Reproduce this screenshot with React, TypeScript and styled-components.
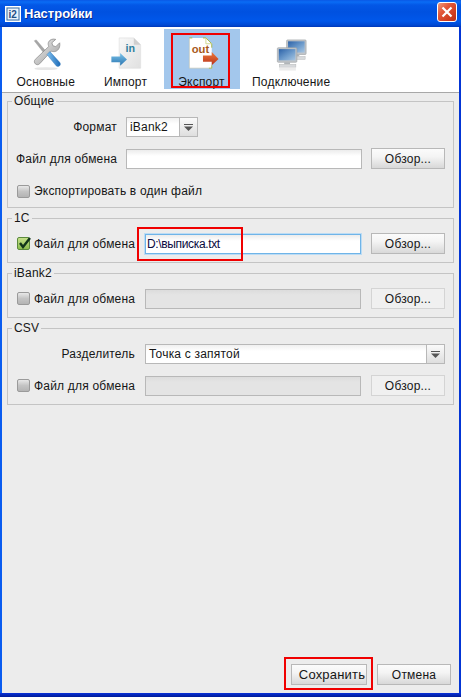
import React from "react";
import styled, { createGlobalStyle } from "styled-components";

const GlobalStyle = createGlobalStyle`
  html, body {
    margin: 0;
    padding: 0;
    background: #ececec;
  }
  * {
    box-sizing: border-box;
  }
`;

const Window = styled.div`
  width: 461px;
  height: 697px;
  display: flex;
  flex-direction: column;
  overflow: hidden;
  font-family: "Liberation Sans", Arial, sans-serif;
  font-size: 12px;
  color: #161616;
  background:
    linear-gradient(to bottom, #0831d9, #001a96) bottom / 100% 4px no-repeat,
    linear-gradient(to right, #0a5cf0 0, #0a5cf0 3px, #0335d5 3px);
`;

const TitleBar = styled.div`
  height: 27px;
  flex: none;
  display: flex;
  align-items: center;
  padding: 0 4px 0 5px;
  background: linear-gradient(
    to bottom,
    #0a58e6 0,
    #0a6cf5 2px,
    #0357e6 5px,
    #0051e0 12px,
    #0057ea 21px,
    #0049d4 25px,
    #0037b8 27px
  );
`;

const TitleText = styled.span`
  margin-left: 3px;
  flex: 1;
  color: #fff;
  font-size: 13px;
  font-weight: 700;
  text-shadow: 1px 1px 0 #0a2c90;
`;

const CloseButton = styled.div`
  width: 20px;
  height: 20px;
  margin-top: -3px;
  border: 1px solid #fff;
  border-radius: 3px;
  background: linear-gradient(135deg, #ee9a7c 0, #e2583a 35%, #cf3c1e 75%, #b9321a 100%);
  display: flex;
  align-items: center;
  justify-content: center;
`;

const Frame = styled.div`
  flex: 1;
  min-height: 0;
  display: flex;
  flex-direction: column;
  margin: 0 2px 4px;
  background: #ececec;
`;

const Toolbar = styled.div`
  flex: none;
  display: flex;
  height: 66px;
  padding: 2px 2px 3px;
  background: #fff;
  border-bottom: 1px solid #a8a8a8;
`;

const Tab = styled.div<{ $active?: boolean }>`
  position: relative;
  min-width: 76px;
  padding: 6px 12.5px 0;
  display: flex;
  flex-direction: column;
  align-items: center;
  background: ${(p) => (p.$active ? "#a3c7ec" : "transparent")};
`;

const TabLabel = styled.span`
  margin-top: 1px;
  letter-spacing: 0.2px;
  line-height: 14px;
  white-space: nowrap;
`;

const Highlight = styled.div<{ $t: number; $r: number; $b: number; $l: number }>`
  position: absolute;
  top: ${(p) => p.$t}px;
  right: ${(p) => p.$r}px;
  bottom: ${(p) => p.$b}px;
  left: ${(p) => p.$l}px;
  border: 2px solid #f00000;
  pointer-events: none;
`;

const Body = styled.div`
  flex: 1;
  min-height: 0;
  display: flex;
  flex-direction: column;
  gap: 3px;
  padding: 1px 5px 0;
`;

const Group = styled.fieldset`
  margin: 0;
  min-width: 0;
  padding: 0 8px 8px;
  border: 1px solid #c4c4c4;
  display: flex;
  flex-direction: column;
`;

const Legend = styled.legend`
  margin-left: -4px;
  padding: 0 2px;
  height: 15px;
  line-height: 15px;
  letter-spacing: 0.2px;
`;

const Row = styled.div<{ $label: number; $gap: number; $top: number }>`
  display: grid;
  grid-template-columns: ${(p) => p.$label}px 1fr 74px;
  column-gap: ${(p) => p.$gap}px;
  align-items: end;
  margin-top: ${(p) => p.$top}px;
`;

const FieldLabel = styled.span`
  align-self: center;
  text-align: right;
  letter-spacing: 0.2px;
  white-space: nowrap;
`;

const CheckLabel = styled.label`
  align-self: center;
  min-height: 16px;
  display: flex;
  align-items: center;
  gap: 4px;
  padding-left: 1px;
  letter-spacing: 0.2px;
  white-space: nowrap;
`;

const CheckBox = styled.span<{ $checked?: boolean }>`
  width: 13px;
  height: 13px;
  flex: none;
  position: relative;
  border: 1px solid ${(p) => (p.$checked ? "#5b8a3c" : "#9a9a9a")};
  border-radius: 2px;
  background: ${(p) =>
    p.$checked
      ? "linear-gradient(to bottom, #c5e08a, #8cbd4e)"
      : "linear-gradient(to bottom, #e8e8e8, #c4c4c4 50%, #b4b4b4)"};
`;

const CheckMark = styled.svg`
  position: absolute;
  left: -1px;
  top: -2px;
`;

const InputBox = styled.div`
  position: relative;
  min-width: 0;
`;

const TextInput = styled.input<{ $focused?: boolean }>`
  display: block;
  width: 100%;
  height: 20px;
  padding: 0 1px;
  outline: none;
  border: 1px solid ${(p) => (p.$focused ? "#6fb4e8" : "#b8b8b8")};
  background: ${(p) =>
    p.disabled ? "linear-gradient(to bottom, #dcdcdc, #e4e4e4 5px)" : "linear-gradient(to bottom, #ececec, #fff 6px)"};
  box-shadow: ${(p) => (p.$focused ? "0 0 0 1px #bcdcf4" : "none")};
  font: inherit;
  color: #0a0a40;
  letter-spacing: -0.35px;
`;

const Combo = styled.div<{ $width?: number; $span?: boolean }>`
  height: 20px;
  display: flex;
  width: ${(p) => (p.$width ? `${p.$width}px` : "auto")};
  grid-column: ${(p) => (p.$span ? "2 / 4" : "auto")};
  border: 1px solid #b8b8b8;
  background: linear-gradient(to bottom, #f0f0f0, #fff 6px);
`;

const ComboValue = styled.span`
  flex: 1;
  padding-left: 3px;
  line-height: 18px;
  letter-spacing: 0.2px;
  white-space: nowrap;
`;

const ComboArrow = styled.span`
  width: 18px;
  flex: none;
  display: flex;
  align-items: center;
  justify-content: center;
  border-left: 1px solid #b8b8b8;
  background: linear-gradient(to bottom, #fafafa, #dedede);
`;

const Button = styled.button<{ $width?: number; $large?: boolean }>`
  position: relative;
  width: ${(p) => (p.$width ? `${p.$width}px` : "auto")};
  height: 21px;
  padding: ${(p) => (p.$large ? "0 0 0 6px" : "0")};
  font: inherit;
  font-size: ${(p) => (p.$large ? "13px" : "12px")};
  letter-spacing: 0.2px;
  color: #161616;
  border: 1px solid ${(p) => (p.disabled ? "#d4d4d4" : "#b8b8b8")};
  background: ${(p) =>
    p.disabled ? "#f0f0f0" : "linear-gradient(to bottom, #fbfbfb, #f4f4f4 40%, #d8d8d8)"};
`;

const Footer = styled.div`
  margin-top: auto;
  display: flex;
  justify-content: flex-end;
  gap: 10px;
  padding: 0 8px 8px;
`;

const ArrowGlyph = () => (
  <svg width="9" height="7" viewBox="0 0 9 7">
    <rect x="0" y="0" width="9" height="1" fill="#555" />
    <path d="M0 2.5h9L4.5 7z" fill="#555" />
  </svg>
);

const ToolsIcon = () => (
  <svg width="40" height="40" viewBox="0 0 40 40">
    <defs>
      <linearGradient id="toolSteel" x1="0" y1="0" x2="1" y2="1">
        <stop offset="0" stopColor="#f2f2f2" />
        <stop offset="1" stopColor="#9a9a9a" />
      </linearGradient>
      <linearGradient id="toolBlue" x1="0" y1="0" x2="1" y2="0">
        <stop offset="0" stopColor="#7fc0ee" />
        <stop offset="1" stopColor="#1c6ab8" />
      </linearGradient>
    </defs>
    <ellipse cx="20" cy="34.5" rx="12" ry="1.5" fill="#e6e6e6" />
    <path d="M8 6l2-1 11 13-2 2z" fill="#a6a6a6" stroke="#8a8a8a" strokeWidth="0.4" />
    <path
      d="M34 8l-4 4-3-1-1-3 4-3.5c-3-1-6.5.3-7.5 3-.5 1.600-.2 3 .4 4.200L9 25c-1.500 1.500-1 3.500 0 4.500s3 1.500 4.500 0l12-13c1.200.6 3 .8 4.500.2 3-1 4.800-4.700 4-8.700z"
      fill="url(#toolSteel)"
      stroke="#8c8c8c"
      strokeWidth="0.8"
    />
    <path d="M21 20l3-3 10 11c1 1.200 1 2.600 0 3.600s-2.500 1-3.600 0z" fill="url(#toolBlue)" stroke="#2a6fb0" strokeWidth="0.4" />
  </svg>
);

const ImportIcon = () => (
  <svg width="40" height="40" viewBox="0 0 40 40">
    <defs>
      <linearGradient id="inPage" x1="0" y1="0" x2="1" y2="1">
        <stop offset="0" stopColor="#f8f8f8" />
        <stop offset="1" stopColor="#e0e0e0" />
      </linearGradient>
      <linearGradient id="inArrow" x1="0" y1="0" x2="0" y2="1">
        <stop offset="0" stopColor="#7cc4ea" />
        <stop offset="1" stopColor="#2a74b0" />
      </linearGradient>
    </defs>
    <path d="M13 3h15l7 7v24H13z" fill="url(#inPage)" stroke="#e2e2e2" strokeWidth="0.8" />
    <path d="M28 3v7h7z" fill="#cfcfcf" />
    <text x="19.500" y="17" fontFamily="Liberation Sans, sans-serif" fontSize="11" fontWeight="700" fill="#2f7f9c">
      in
    </text>
    <path d="M5 22h9v-3.500L21 25l-7 6.500V28H5z" fill="url(#inArrow)" />
  </svg>
);

const ExportIcon = () => (
  <svg width="40" height="40" viewBox="0 0 40 40">
    <defs>
      <linearGradient id="outArrow" x1="0" y1="0" x2="0" y2="1">
        <stop offset="0" stopColor="#ef7a3a" />
        <stop offset="1" stopColor="#b8321c" />
      </linearGradient>
    </defs>
    <path d="M7 3h17l6 6v25H7z" fill="#fff" />
    <path d="M7 3h3M21 3h3l6 6v4M30 31v3h-3" fill="none" stroke="#a8b848" strokeWidth="1" />
    <path d="M24 3v6h6" fill="none" stroke="#d0d890" strokeWidth="1" />
    <path d="M7 3v31h20" fill="none" stroke="#bfbfa8" strokeWidth="0.6" />
    <text x="9.500" y="18.500" fontFamily="Liberation Sans, sans-serif" fontSize="11.500" fontWeight="700" fill="#a85a1c">
      out
    </text>
    <path d="M21 21h9v-3.500L37 24.500 30 31v-3.500h-9z" fill="url(#outArrow)" />
  </svg>
);

const Monitor = ({ x, y }: { x: number; y: number }) => (
  <g transform={`translate(${x} ${y})`}>
    <rect x="0" y="0" width="20" height="15" rx="1" fill="#c0c4c8" stroke="#9a9ea2" strokeWidth="0.6" />
    <rect x="1.500" y="1.500" width="17" height="11.500" fill="url(#netScreen)" />
    <rect x="7" y="15" width="6" height="2" fill="#b0b4b8" />
    <rect x="2" y="17" width="17" height="3" fill="#d8dadc" stroke="#b6b8ba" strokeWidth="0.5" />
  </g>
);

const NetworkIcon = () => (
  <svg width="40" height="40" viewBox="0 0 40 40">
    <defs>
      <linearGradient id="netScreen" x1="0" y1="0" x2="1" y2="1">
        <stop offset="0" stopColor="#2c62a8" />
        <stop offset="0.55" stopColor="#6e9ccc" />
        <stop offset="1" stopColor="#a8c6e2" />
      </linearGradient>
    </defs>
    <Monitor x={15.5} y={5} />
    <Monitor x={6} y={13} />
    <rect x="8" y="33.500" width="17" height="3" fill="#ececec" />
  </svg>
);

const LogoBox = () => (
  <svg width="16" height="16" viewBox="0 0 16 16">
    <rect x="0.500" y="0.500" width="15" height="15" fill="#eaf2fb" stroke="#ffffff" />
    <rect x="2" y="2" width="12" height="12" fill="none" stroke="#3a6ea5" strokeWidth="1" />
    <text x="3.500" y="12" fontFamily="Liberation Sans, sans-serif" fontSize="10" fontWeight="700" fill="#1f4f86">
      i2
    </text>
  </svg>
);

const FileRow = ({ checked, enabled, value }: { checked?: boolean; enabled?: boolean; value?: string }) => (
  <>
    <CheckLabel>
      <CheckBox $checked={checked}>
        {checked && (
          <CheckMark width="15" height="15" viewBox="0 0 15 15">
            <path d="M3 7l3 4 7-9" fill="none" stroke="#12361a" strokeWidth="2.400" />
          </CheckMark>
        )}
      </CheckBox>
      Файл для обмена
    </CheckLabel>
    <InputBox>
      <TextInput readOnly disabled={!enabled} $focused={checked} value={value ?? ""} />
      {checked && <Highlight $t={-7} $r={118} $b={-7} $l={-8} />}
    </InputBox>
    <Button disabled={!enabled}>Обзор...</Button>
  </>
);

export default function App() {
  return (
    <Window>
      <GlobalStyle />
      <TitleBar>
        <LogoBox />
        <TitleText>Настройки</TitleText>
        <CloseButton>
          <svg width="12" height="12" viewBox="0 0 12 12">
            <path d="M1.500 1.500l9 9M10.500 1.500l-9 9" stroke="#fff" strokeWidth="2.200" />
          </svg>
        </CloseButton>
      </TitleBar>
      <Frame>
        <Toolbar>
          <Tab>
            <ToolsIcon />
            <TabLabel>Основные</TabLabel>
          </Tab>
          <Tab>
            <ImportIcon />
            <TabLabel>Импорт</TabLabel>
          </Tab>
          <Tab $active>
            <ExportIcon />
            <TabLabel>Экспорт</TabLabel>
            <Highlight $t={4} $r={10} $b={1} $l={7} />
          </Tab>
          <Tab>
            <NetworkIcon />
            <TabLabel>Подключение</TabLabel>
          </Tab>
        </Toolbar>
        <Body>
          <Group>
            <Legend>Общие</Legend>
            <Row $label={101} $gap={9} $top={8}>
              <FieldLabel>Формат</FieldLabel>
              <Combo $width={72}>
                <ComboValue>iBank2</ComboValue>
                <ComboArrow>
                  <ArrowGlyph />
                </ComboArrow>
              </Combo>
            </Row>
            <Row $label={101} $gap={9} $top={11}>
              <FieldLabel>Файл для обмена</FieldLabel>
              <InputBox>
                <TextInput readOnly value="" />
              </InputBox>
              <Button>Обзор...</Button>
            </Row>
            <Row $label={200} $gap={9} $top={14}>
              <CheckLabel>
                <CheckBox />
                Экспортировать в один файл
              </CheckLabel>
            </Row>
          </Group>
          <Group>
            <Legend>1С</Legend>
            <Row $label={119} $gap={10} $top={7}>
              <FileRow checked enabled value="D:\выписка.txt" />
            </Row>
          </Group>
          <Group>
            <Legend>iBank2</Legend>
            <Row $label={119} $gap={10} $top={7}>
              <FileRow />
            </Row>
          </Group>
          <Group>
            <Legend>CSV</Legend>
            <Row $label={119} $gap={10} $top={8}>
              <FieldLabel>Разделитель</FieldLabel>
              <Combo $span>
                <ComboValue>Точка с запятой</ComboValue>
                <ComboArrow>
                  <ArrowGlyph />
                </ComboArrow>
              </Combo>
            </Row>
            <Row $label={119} $gap={10} $top={11}>
              <FileRow />
            </Row>
          </Group>
        </Body>
        <Footer>
          <Button $width={76} $large>
            Сохранить
            <Highlight $t={-8} $r={-7} $b={-6} $l={-8} />
          </Button>
          <Button $width={74}>Отмена</Button>
        </Footer>
      </Frame>
    </Window>
  );
}
